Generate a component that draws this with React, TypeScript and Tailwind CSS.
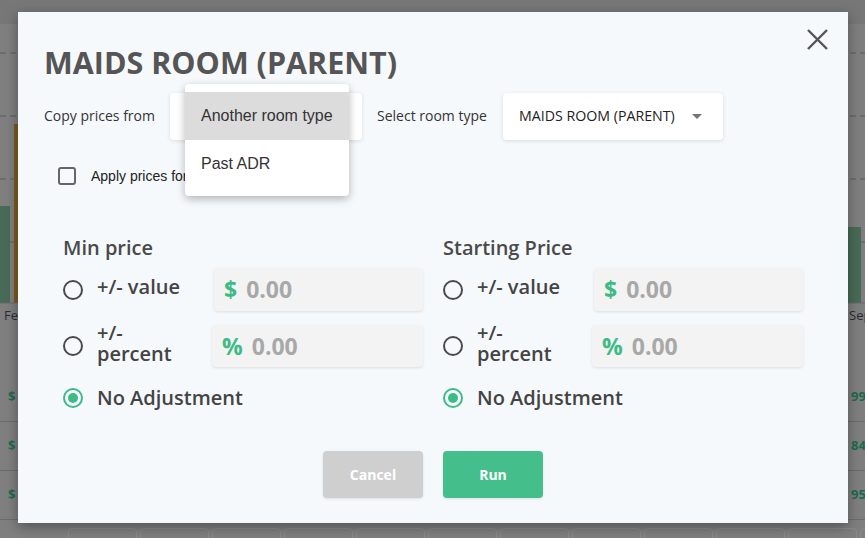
import React from 'react';

const font = "font-['Open_Sans',sans-serif]";

function Radio({ checked }: { checked?: boolean }) {
  return checked ? (
    <span className="w-5 h-5 shrink-0 rounded-full border-2 border-[#3dbb87] flex items-center justify-center">
      <span className="w-[10px] h-[10px] rounded-full bg-[#3dbb87]" />
    </span>
  ) : (
    <span className="w-5 h-5 shrink-0 rounded-full border-2 border-[#4a4a4a]" />
  );
}

function AmountInput({ unit, width, unitGap }: { unit: string; width: string; unitGap: string }) {
  return (
    <div className={`${width} h-full bg-[#f3f3f3] rounded-sm shadow-[0_1px_3px_rgba(0,0,0,0.1)] flex items-center pl-[10px] text-[23px] font-bold`}>
      <span className="text-[#3dbb87]">{unit}</span>
      <span className={`${unitGap} text-[#a8a8a8]`}>0.00</span>
    </div>
  );
}

function PriceColumn({ title }: { title: string }) {
  return (
    <div className="w-[360px] flex flex-col">
      <h3 className="h-[28px] leading-[28px] text-[20px] font-semibold text-[#4a4a4a]">{title}</h3>
      <div className="mt-[6px] h-[43px] flex items-center">
        <Radio />
        <span className="ml-[14px] w-[117px] text-[20px] font-semibold text-[#444] leading-[24px] -mt-[6px]">+/- value</span>
        <AmountInput unit="$" width="w-[209px]" unitGap="ml-[9px]" />
      </div>
      <div className="mt-[14px] h-[42px] flex items-center">
        <Radio />
        <span className="ml-[14px] w-[115px] text-[20px] font-semibold text-[#444] leading-[21px] -mt-[6px]">
          +/-
          <br />
          percent
        </span>
        <AmountInput unit="%" width="w-[211px]" unitGap="ml-[9px]" />
      </div>
      <div className="mt-[17px] h-[28px] flex items-center">
        <Radio checked />
        <span className="ml-[14px] text-[20px] font-semibold text-[#444]">No Adjustment</span>
      </div>
    </div>
  );
}

export default function App() {
  const rows = [
    { right: '99' },
    { right: '84' },
    { right: '95' },
  ];

  return (
    <div className={`relative w-[865px] h-[538px] overflow-hidden bg-[#7f7f7f] ${font}`}>
      {/* dimmed page behind the modal */}
      <div className="h-[24px] bg-[#777777]" />
      <svg width="865" height="280" className="block">
        {[29, 92, 155, 218].map((y) => (
          <line key={y} x1="0" x2="865" y1={y} y2={y} stroke="#686868" strokeWidth="1.5" strokeDasharray="6 4" />
        ))}
        <rect x="0" y="182" width="10" height="97" fill="#476b57" />
        <rect x="14" y="100" width="4" height="179" fill="#7a5c1e" />
        <rect x="848" y="203" width="13" height="76" fill="#476b57" />
        <line x1="0" x2="865" y1="279" y2="279" stroke="#6a6a6a" strokeWidth="1" />
      </svg>
      <div className="h-[24px] flex items-center justify-between pl-[4px] text-[13px] text-[#2b2b3a]">
        <span>Fe</span>
        <span className="mr-[-10px] w-[26px]">Sep</span>
      </div>
      <div className="mt-[45px] flex flex-col">
        {rows.map((r) => (
          <div key={r.right} className="h-[49px] border-b border-[#6c6c6c] flex items-center justify-between pl-[8px] text-[13px] font-bold text-[#1e6a50]">
            <span>$</span>
            <span className="w-[14px]">{r.right}</span>
          </div>
        ))}
      </div>
      <div className="mt-[8px] flex gap-[3px] pl-[68px]">
        {Array.from({ length: 12 }).map((_, i) => (
          <div key={i} className="w-[69px] h-[20px] shrink-0 border border-[#8a8a8a] rounded-sm" />
        ))}
      </div>

      {/* modal */}
      <div className="absolute left-[18px] top-[12px] w-[830px] h-[511px] bg-[#f6f9fc] shadow-[0_4px_12px_rgba(0,0,0,0.35)] flex flex-col pl-[26px] pt-[30px]">
        <button className="absolute left-[789px] top-[17px] w-[21px] h-[21px]">
          <svg width="21" height="21" viewBox="0 0 21 21">
            <path d="M1 1 L20 20 M20 1 L1 20" stroke="#555" strokeWidth="2.4" />
          </svg>
        </button>

        <h2 className="h-[40px] leading-[40px] text-[30.5px] font-bold text-[#555555]">MAIDS ROOM (PARENT)</h2>

        <div className="mt-[11px] h-[47px] flex items-center text-[14px] text-[#333]">
          <span className="w-[126px] -mt-[3px]">Copy prices from</span>
          <div className="relative w-[192px] h-full bg-white rounded shadow-[0_1px_4px_rgba(0,0,0,0.12)]">
            <div className="absolute left-[15px] top-[-9px] w-[164px] py-[8px] bg-white rounded shadow-[0_3px_8px_rgba(0,0,0,0.28)] font-['Liberation_Sans',Arial,sans-serif] text-[16px] text-[#333] z-10">
              <div className="h-[48px] flex items-center pl-[16px] bg-[#dcdcdc]">Another room type</div>
              <div className="h-[48px] flex items-center pl-[16px]">Past ADR</div>
            </div>
          </div>
          <span className="ml-[15px] w-[126px] -mt-[3px]">Select room type</span>
          <div className="w-[220px] h-full bg-white rounded shadow-[0_1px_4px_rgba(0,0,0,0.12)] flex items-center pl-[16px] text-[#222]">
            <span className="text-[14.2px] -mt-[1px]">MAIDS ROOM (PARENT)</span>
            <svg width="10" height="5" viewBox="0 0 10 5" className="ml-[17px]">
              <path d="M0 0 L10 0 L5 5 Z" fill="#757575" />
            </svg>
          </div>
        </div>

        <div className="mt-[27px] h-[18px] flex items-center pl-[14px]">
          <span className="w-[18px] h-[18px] rounded-[3px] border-2 border-[#666]" />
          <span className="ml-[15px] font-['Liberation_Sans',Arial,sans-serif] text-[14px] text-[#222]">Apply prices for all dates</span>
        </div>

        <div className="mt-[49px] flex gap-[20px] pl-[19px]">
          <PriceColumn title="Min price" />
          <PriceColumn title="Starting Price" />
        </div>

        <div className="mt-[39px] flex gap-[20px] pl-[279px]">
          <button className="w-[100px] h-[47px] rounded-sm bg-[#cfcfcf] text-white text-[14px] font-bold shadow-[0_1px_3px_rgba(0,0,0,0.1)]">Cancel</button>
          <button className="w-[100px] h-[47px] rounded-sm bg-[#44bf8c] text-white text-[14px] font-bold shadow-[0_1px_3px_rgba(0,0,0,0.1)]">Run</button>
        </div>
      </div>
    </div>
  );
}
